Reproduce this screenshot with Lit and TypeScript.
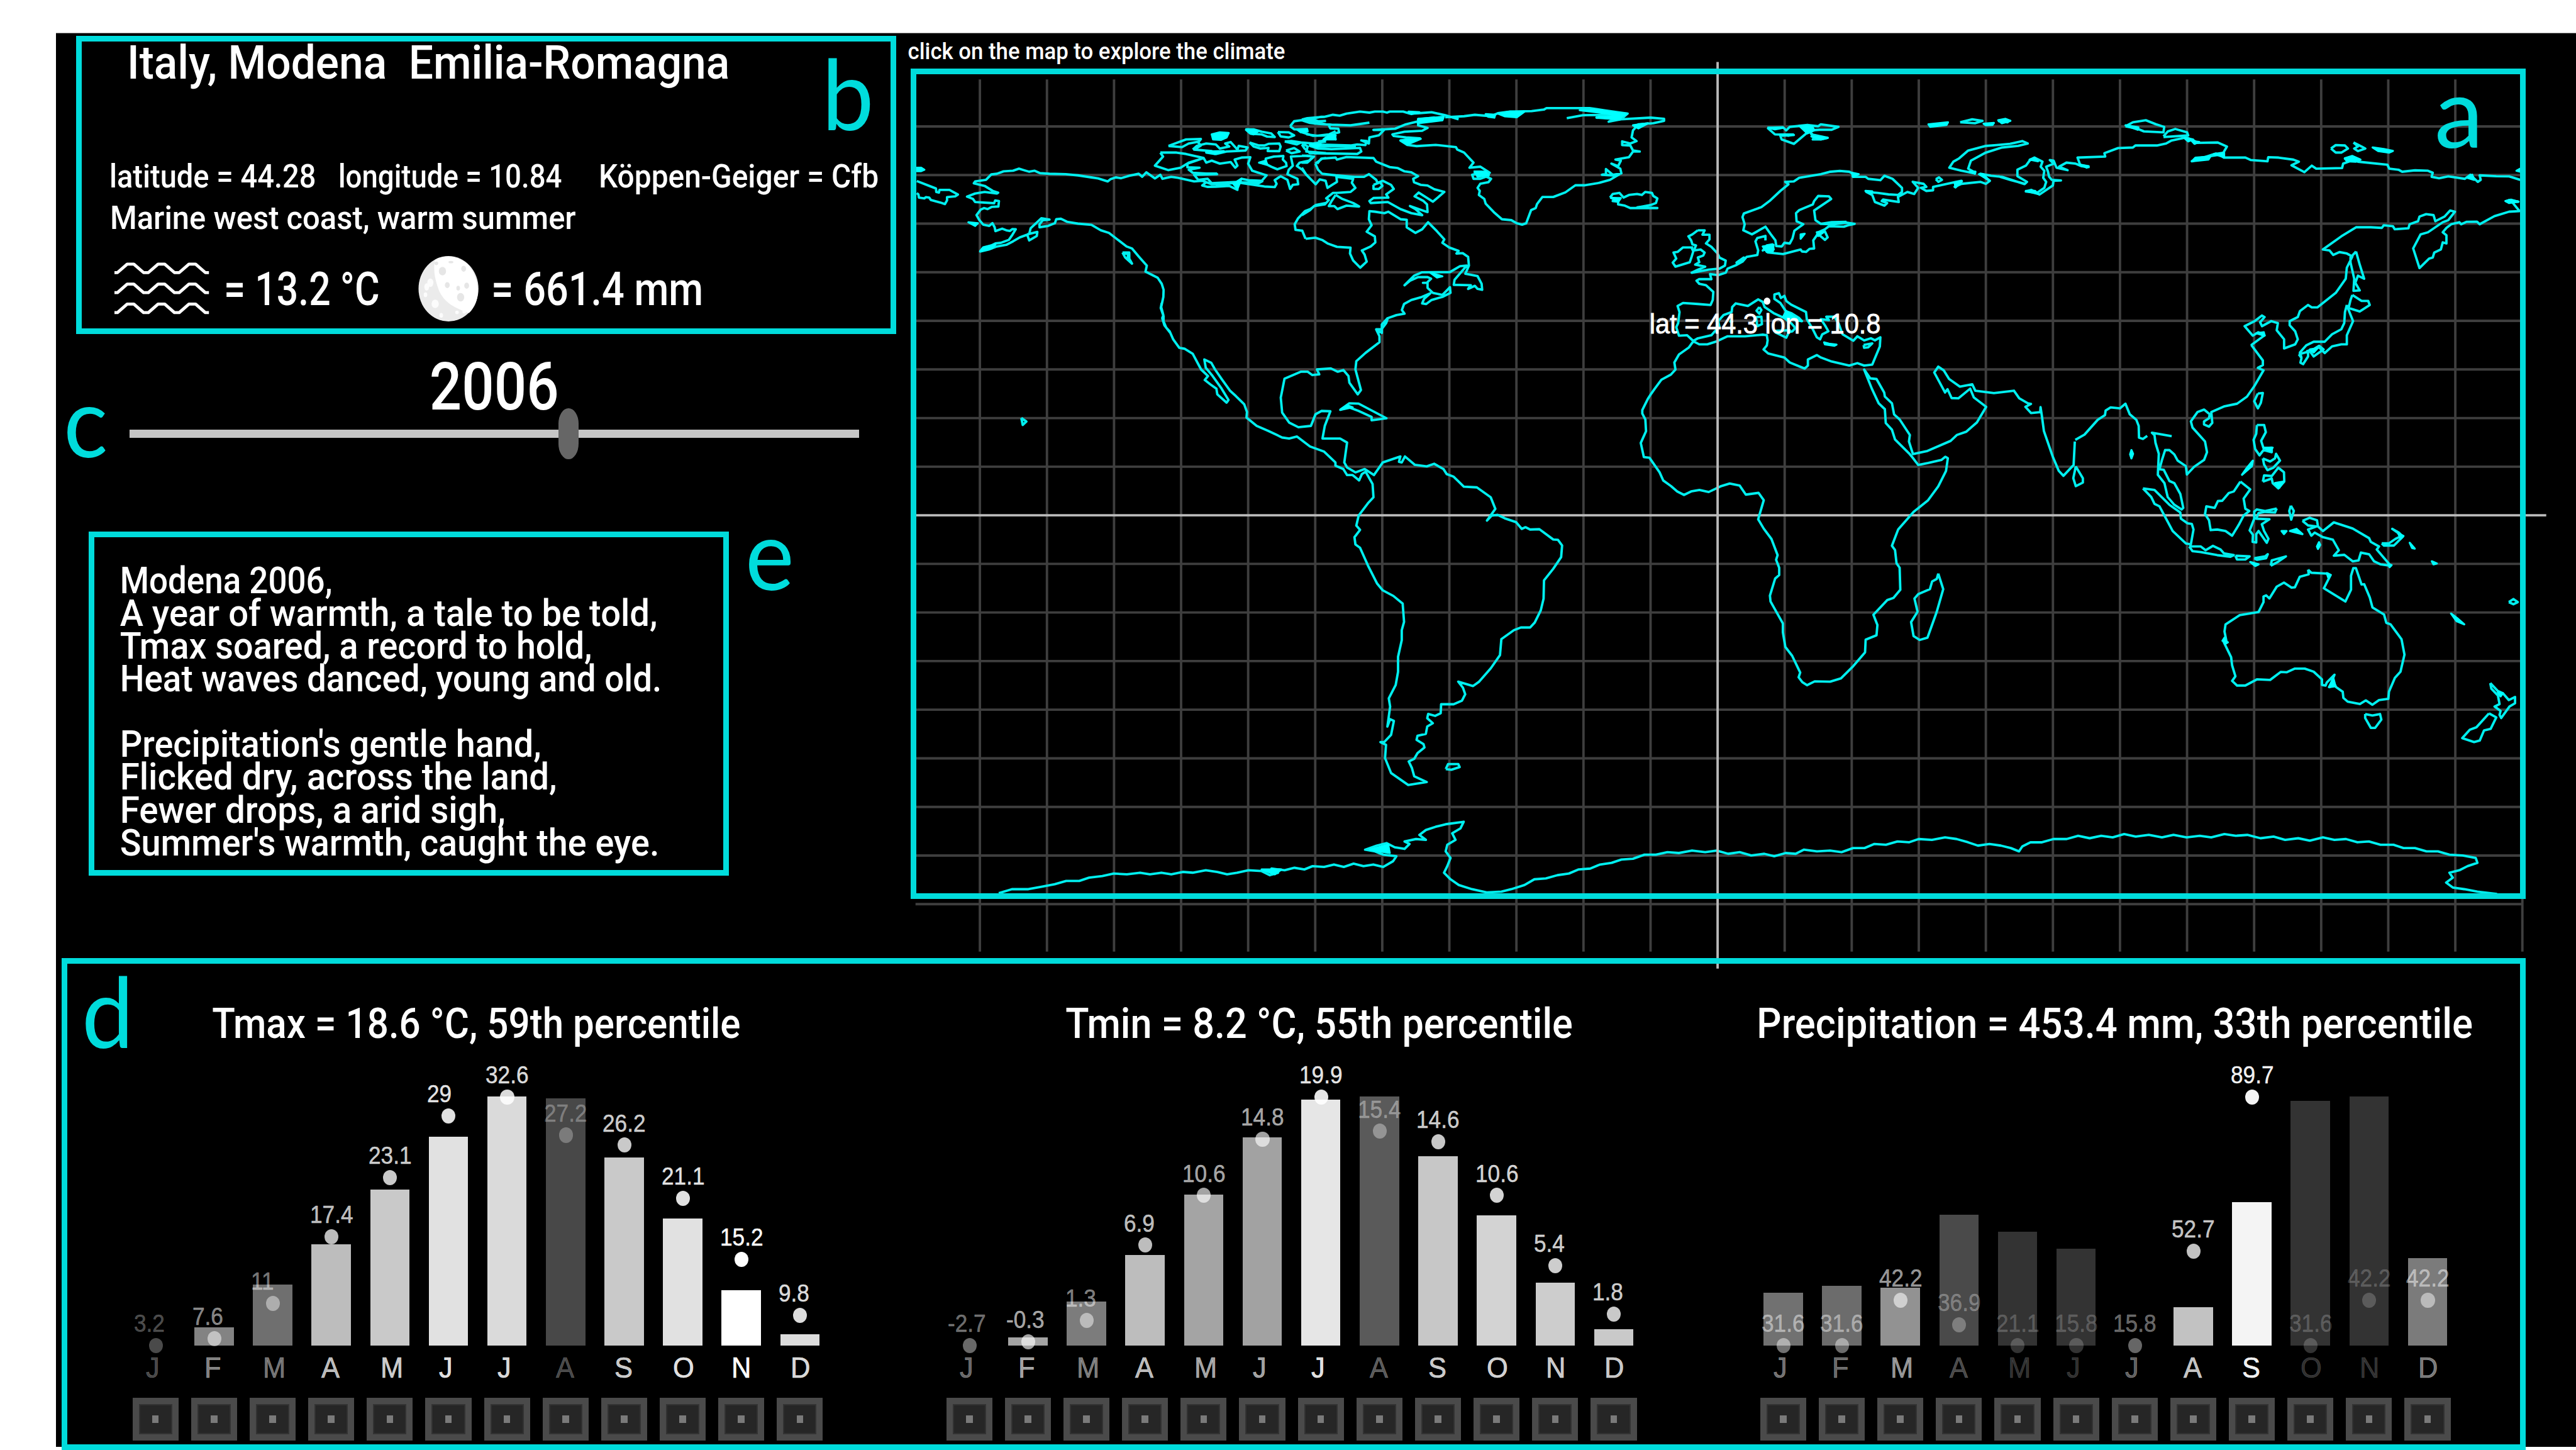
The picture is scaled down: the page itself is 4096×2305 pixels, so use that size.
import { LitElement, html, svg, css } from "lit";
import { customElement, property } from "lit/decorators.js";

/* ---------- text fitted to a given ink width ---------- */

@customElement("fit-text")
export class FitText extends LitElement {
  @property() text = "";
  @property({ type: Number }) size = 40;
  @property({ type: Number }) width = 100;
  /* height of the capitals; the bottom edge of the element is the baseline */
  @property({ type: Number }) cap = 30;
  @property() face = "Roboto";
  @property({ type: Number }) weight = 400;

  static styles = css`
    :host { display: block; flex: none; color: #fff; }
    .box { display: block; overflow: visible; }
    .txt { fill: currentColor; white-space: pre; }
  `;

  render() {
    const b = this.size * 0.04;
    return html`<svg class="box" width=${this.width} height=${this.cap}>
      <text class="txt" x=${-b} y=${this.cap} textLength=${this.width + 2 * b}
        lengthAdjust="spacingAndGlyphs" font-size=${this.size} font-weight=${this.weight}
        font-family="${this.face}, sans-serif">${this.text}</text>
    </svg>`;
  }
}

/* ---------- world map ---------- */

interface Sheet {
  x: number;
  y: number;
  sx: number;
  sy: number;
  lines: string[];
  solids?: string[];
}

const SHEETS: Sheet[] = [
  {
    x: 1490, y: 50, sx: 2.24, sy: 3,
    lines: [
      "54,746 104,772 125,783 126,800 136,803 138,790 175,790 206,813 196,822 166,826 166,842 158,860 140,852 106,840 100,828 88,826 82,832 62,828 60,812 54,806",
      "288,1095 300,1075 330,1065 345,1055 365,1052 395,1037 408,1012 420,985 408,984 398,993 385,990 370,982 345,994 342,975 334,955 322,968 300,962 285,938 275,915 290,888 303,880 316,885 332,874 356,872 358,845 344,842 340,856 270,850 262,835 240,823 270,808 305,800 350,808 355,804 335,795 305,770 265,757 270,748 310,740 330,713 350,710 375,698 410,695 432,685 450,692 470,700 490,695 510,707 545,710 605,712 650,718 700,728 725,733 760,748 770,737 790,728 810,732 840,720 875,710 888,725 903,703 935,733 955,715 963,735 995,725 1020,730 1080,748 1110,745 1125,752 1110,768 1130,775 1160,774 1210,770 1240,790 1238,770 1250,755 1300,765 1340,773 1378,776 1385,760 1378,742 1400,722 1425,740 1435,785 1445,765 1465,762 1462,735 1440,722 1425,712 1430,690 1445,670 1440,640 1438,625 1500,620 1520,625 1505,645 1470,655 1460,672 1480,690 1495,715 1530,762",
      "1568,855 1530,865 1510,885 1490,895 1465,930 1452,960 1455,988 1480,992 1492,1032",
      "288,1095 320,1085 350,1070 385,1062 410,1045 435,1025 470,1008 475,980 495,955 515,930 545,937 520,940 508,960 508,975 540,968 565,955 570,935 587,933 610,948 650,957 700,963 735,990 765,1003 830,1070 850,1080 875,1120 905,1165 900,1195 945,1225 960,1255 967,1285 966,1320 958,1370 966,1410 962,1425 970,1460 993,1500",
      "462,1010 500,998 498,1018 470,1040 462,1010",
      "815,1100 840,1100 840,1130 850,1155 825,1125 815,1100",
      "820,1105 836,1106 834,1128 845,1148",
      "955,605 1015,605 1050,612 1115,632 1060,655 1030,680 985,692 935,670 965,625 955,605",
      "1115,632 1125,655 1145,645 1175,660 1215,652 1232,680 1240,670 1230,640 1255,630 1288,628 1280,660 1295,695 1348,718 1330,745 1280,742 1255,735 1240,750 1145,757 1130,735 1095,740 1080,715 1165,712 1075,705 1060,690 1100,680 1055,678 1055,660 1115,632",
      "1080,708 1165,709",
      "1110,745 1145,762 1200,760 1240,752 1320,756 1335,745",
      "1325,655 1345,650 1345,635 1375,625 1410,622 1408,640 1420,655 1422,672 1388,688 1365,675 1350,665 1325,655",
      "985,572 1050,540 1105,538 1095,555 1105,570 1080,590 1145,598 1125,605 1160,612 1200,600 1270,595 1278,580 1245,572 1240,590 1215,553 1195,560 1210,575 1175,585 1160,565 1125,560 1090,572 1075,590",
      "985,572 1035,578 1060,560 1100,550",
      "1270,490 1300,490 1330,502 1365,510 1378,528 1350,526 1330,515 1290,512 1270,490",
      "1390,503 1430,505 1450,520 1430,530 1400,525 1390,503",
      "1285,555 1320,570 1340,570 1355,562 1395,560 1400,575 1395,598 1352,597 1355,582 1325,585 1300,575 1285,555",
      "1415,550 1440,548 1475,555 1460,565 1415,550",
      "1420,595 1450,583 1470,600 1440,608 1420,595",
      "1435,475 1450,450 1500,440 1550,428 1568,427",
      "1495,440 1530,455 1568,465 M1510,436 1540,450 1568,448",
      "1435,475 1450,490 1495,490 1480,505 1520,522 1568,520",
      "1480,560 1500,575 1495,600 1568,608 M1475,555 1520,560 1568,550",
      "1535,660 1550,635 1568,632",
    ],
    solids: [
      "54,680 70,680 82,690 70,697 54,697",
      "245,950 280,955 270,968",
      "1145,515 1175,505 1208,508 1200,530 1180,542 1150,540",
      "1272,490 1300,492 1315,502 1300,515 1285,508",
      "1460,490 1498,488 1500,500 1475,505",
      "1125,600 1190,598 1155,612",
      "1320,655 1345,645 1350,662",
      "1225,760 1255,735 1240,785",
      "288,1095 300,1076 345,1060 330,1080",
    ],
  },
  {
    x: 2150, y: 50, sx: 2.24, sy: 3,
    lines: [
      "0,680 15,712 51,762 66,738 88,745 95,780 112,765 130,750 128,725 190,735 185,755 198,780 180,800 130,805 115,805 90,832 100,840 85,862 45,870 30,890 0,915",
      "14,1032 50,1027 75,1038 95,1055 130,1072 180,1076 178,1105 190,1140 216,1175 240,1145 232,1110 222,1090 255,1070 272,1050 270,1020 240,997 258,965 248,935 250,895 270,898 305,905 320,898 365,935 388,938 388,975 420,1003 445,985 467,950 500,995 527,1035 520,1052 545,1075 580,1092 572,1105 595,1103 615,1122 618,1165 605,1205 650,1217 665,1255 667,1285 650,1280 640,1265 615,1280 625,1262 562,1260 565,1235 610,1165 585,1168 548,1197 445,1198 415,1215 380,1262 400,1240 430,1222 465,1222 478,1230 462,1250 448,1250 465,1250 465,1275 485,1300 520,1310 548,1272 550,1300 520,1320 480,1335 460,1355 445,1352 452,1330 475,1302 440,1322 405,1335 378,1355 370,1385 380,1403 350,1410 318,1425 312,1450 295,1480 275,1480 288,1500",
      "0,442 20,435 60,430 85,428 115,418 140,422 165,412 215,402 250,407 270,402 300,402 315,407 325,402 375,402 400,412 430,410 480,405 530,420 555,430 580,440",
      "520,445 430,440 490,432 430,450 385,465 345,487 265,493 305,492 285,520 250,530 248,560 220,545 240,548 235,568 205,565 180,570 50,565 30,572 60,585 110,588 215,582 220,600 205,612 30,608 10,585 0,565",
      "0,445 30,458 60,463 110,467 180,470 250,457",
      "20,435 60,460 M60,575 200,572",
      "100,470 105,485 135,487 138,505 120,510 125,540 105,520 85,545 60,550",
      "0,495 20,515 55,522 100,515 125,500",
      "0,620 45,625 20,655 0,655",
      "50,660 75,635 125,630 130,640 165,627 265,632 275,650 325,677 355,682 380,698 405,703 430,722 412,735 415,752 440,765 465,768 490,787 527,800 485,848 432,803 417,822 450,845 463,862 465,900 400,870 420,885 445,915 405,905 365,885 318,850 255,855 250,845 265,830 320,828 312,812 340,785 330,765 300,745 280,755 275,740 248,712 230,725 195,725 125,718 75,710 60,690 55,675 50,660",
      "125,815 110,845 100,870 120,870 132,885 165,868 212,872 190,855 150,835 125,815",
      "265,765 290,752 298,770 285,785 265,785 265,765",
      "530,430 600,425 640,418 700,425 725,410 770,402 850,400 895,392 905,385 1065,385 1115,395 1205,412 1180,440 1290,432 1340,438 1340,448 1300,460 1245,465 1225,495 1220,530 1238,548 1215,560 1185,550 1185,568 1215,570 1225,595 1250,600 1225,600 1210,628 1160,640 1180,645 1170,672 1145,660 1178,685 1182,708 1150,715 1125,687 1125,712 1110,715 1150,718 1175,712 1140,740 1100,755 1045,767 1012,767 975,802 930,825 890,825 870,860 865,880 848,890 830,955 815,962 795,955 775,940 740,935 710,900 680,858 675,835 655,815 658,795 650,780 660,760 690,752 700,735 675,720 695,705 660,675 620,680 635,655 600,605 575,590 570,578 495,567 425,573 390,567 365,545 395,540 437,535 385,530 340,523 335,515 380,502 445,497 465,483 430,470 430,455",
      "635,700 665,700 690,720 660,735 635,735 630,715 660,705 680,725",
      "980,435 1040,420 1150,418 1090,432 1180,440 1135,452 1180,425 1205,412",
      "1140,828 1150,810 1175,805 1190,828 1210,815 1240,810 1258,815 1270,800 1295,805 1300,820 1315,832 1310,855 1290,865 1240,877 1315,880 1215,880 1195,868 1170,862 1170,848 1150,845 1175,835 1140,828",
    ],
    solids: [
      "725,412 770,402 822,404 795,430 750,425",
      "680,415 715,418 712,432 690,428",
      "395,402 435,405 405,415",
      "430,438 525,428 520,445 430,460",
      "475,1200 520,1218 500,1224",
      "1028,395 1110,395 1140,405 1205,412 1180,425 1130,412",
      "1090,430 1185,425 1175,442",
      "365,545 440,537 390,565",
      "1145,830 1180,830 1170,850",
      "80,540 105,515 125,520 120,540",
      "1225,470 1280,460 1245,485",
      "30,565 70,565 55,580",
      "640,700 680,700 692,715 650,725",
    ],
  },
  {
    x: 2650, y: 150, sx: 2.24, sy: 3,
    lines: [
      "345,690 370,690 362,712 388,712 388,735 375,755 395,772 418,805 425,825 448,840 445,865 425,880 385,885 322,900 345,885 372,870 335,860 350,848 345,825 365,815 370,800 355,785 330,790 338,765 325,760 320,740 310,720 325,710 345,690",
      "328,775 290,775 270,797 255,800 265,830 252,850 262,870 315,848 322,820 328,795 322,778",
      "920,410 905,400 870,396 835,400 800,412 720,430 700,448 668,450 680,462 650,495 610,545 580,575 515,607 510,625 518,660 513,690 545,710 595,672 615,710 632,740 635,768 655,770 665,752 685,755 695,730 702,692 735,660 710,645 708,605 720,590 770,562 775,545 790,520 830,522 838,535 775,592 780,640 800,658 850,660 895,652 925,658 900,665 885,672 830,670 815,685 790,700 785,715 772,740 775,780 758,782 745,797 730,795 725,785 660,808 605,800 600,780 585,790 600,765 620,760 625,785 600,800",
      "790,700 815,695 825,725 815,737 795,715",
      "800,658 840,650 895,648",
      "595,740 595,718 565,728 558,745 568,790 565,812 525,822 510,845 490,860 488,850 515,825 488,862 455,880 448,900 420,912 390,907 395,932 350,932 340,940 350,955 375,962 402,995 400,1035 392,1060 345,1055 290,1050 270,1065 277,1095 272,1150 265,1170 275,1212 305,1210 328,1238 345,1225 395,1210 408,1190 425,1170 420,1140 440,1110 470,1095 472,1070 485,1052 530,1065 568,1032 585,1045 592,1070 625,1100 665,1125 690,1150 700,1165 705,1175 695,1190 680,1195 680,1165",
      "690,1130 730,1140 720,1125 690,1100 670,1090 650,1050 628,1030 628,1008 645,1002 652,1025 665,1015 672,1040 690,1058 745,1095 748,1130 770,1180 785,1220 797,1230 805,1205 828,1190 815,1160 800,1130 830,1135 820,1118 850,1118 865,1150 880,1205 920,1237 935,1215 960,1235 985,1225 1000,1235 1020,1220 1018,1265 990,1355 960,1360 935,1348 905,1360 840,1340 800,1320 785,1308 752,1330 752,1360 740,1375 685,1345 665,1320 605,1300 588,1280 600,1260 603,1235 600,1210 585,1207 520,1215 455,1215 415,1240 380,1255 350,1255 328,1240 312,1270 275,1305 258,1345 262,1380 245,1405 210,1430 185,1475 172,1500",
      "572,1070 580,1085 572,1103 562,1088 572,1070",
      "560,1120 580,1118 582,1155 565,1165 560,1120",
      "630,1188 685,1185 672,1222 630,1195",
      "958,1258 990,1250 975,1270 960,1272 958,1258",
      "462,1140 475,1145",
      "920,410 920,425 965,425 975,435 1020,442 1035,420 1065,435 1100,480 1100,500 1085,515 1050,512 1010,505 968,500 990,515 1000,550 1035,568 1045,555 1025,545 1030,538 1088,550 1085,525 1120,500 1145,510 1160,480 1140,450 1180,460 1190,475 1170,480 1190,495 1215,492 1215,475 1300,450 1320,445 1295,475 1320,460 1390,450 1410,460 1425,445 1390,410 1430,420 1470,425 1555,462",
      "1225,437 1237,428 1248,440 1235,450 1225,437",
      "1370,408 1320,395 1275,380 1290,350 1310,335 1345,295 1410,272 1450,268 1500,262 1545,248 1565,260 1530,272 1470,280 1410,305 1355,345 1345,385 1372,405",
      "602,182 660,180 672,195 685,178 750,168 790,175 800,165 865,178 840,192 795,192 760,195 765,215 825,232 800,240 770,240 778,225 755,200 700,262 655,240 650,222 700,218 630,215 602,182",
      "1315,155 1360,140 1398,148 1370,160 1315,155",
    ],
    solids: [
      "725,710 740,707 725,732",
      "812,1245 830,1252 858,1256 850,1262 815,1255",
      "720,172 768,175 775,195 750,210",
      "605,182 660,182 630,190",
      "765,225 825,232 800,240",
      "650,215 698,215 680,222",
      "1198,165 1270,155 1265,168 1205,178",
      "1402,162 1440,158 1435,168 1410,170",
      "1458,150 1500,146 1490,156",
      "915,405 940,412 918,425",
      "585,770 625,762 622,795 600,798",
      "1295,455 1322,447 1298,478",
      "785,700 810,700 790,718",
      "660,1120 728,1140 700,1120 672,1090",
      "965,495 990,497 985,508",
      "1350,400 1372,400 1370,410",
      "1385,412 1400,412 1424,445",
    ],
  },
  {
    x: 3300, y: 100, sx: 1.6415, sy: 3,
    lines: [
      "0,572 35,592 72,610 78,600 52,572 52,540 75,520 85,495 98,480 120,500 115,525 125,545 122,580 130,600 125,630 105,655 75,648 90,640 112,663 148,618 150,595 170,593 145,590 138,575 135,550 130,525 150,510 140,492 150,495 158,530 188,542 165,525 185,505 210,510 225,522 245,527 222,515 215,480 290,475 288,458 325,433 365,430 372,420 430,420 455,410 470,395 510,380 530,395 540,407 595,405 620,425 612,450 612,475 590,460 525,498 550,480 600,465 612,480 670,480 685,492 730,498 732,478 760,480 800,490 815,500 795,518 830,552 850,520 862,535 932,532 935,510 950,500 940,485 960,475 980,490 975,500 1055,515 1060,535 1085,540 1095,550 1130,543 1165,545 1178,555 1175,575 1195,582 1220,573 1265,585 1280,565 1300,600 1308,590 1305,568 1350,572 1385,573 1415,590",
      "345,325 365,305 400,295 428,315 450,328 448,355 395,350 375,335 345,325",
      "448,375 460,350 480,338 512,355 515,370 448,378",
      "902,435 915,418 940,420 948,435 930,455 915,455 902,435",
      "963,405 985,425 995,435 975,448 965,435 975,425 963,405",
      "1375,698 1385,690 1410,698 1393,700 1413,745 1385,748 1345,770 1305,810 1298,797 1270,798 1255,810 1250,800 1228,810 1215,828 1205,850 1215,865 1215,905 1205,900 1200,935 1182,950 1178,975 1168,980 1142,1027 1125,930 1145,860 1165,850 1205,800 1220,790 1238,748 1225,742 1210,772 1185,795 1180,765 1160,760 1142,772 1138,795 1115,810 1112,830 1075,835 1070,820 1045,815 1040,828 1010,825 970,825 930,870 880,935 898,940 908,962 925,948 945,955 960,970 945,1025 942,1080 915,1150 865,1222 850,1222 840,1210 818,1240 812,1270 790,1290 790,1310 805,1340 812,1380 805,1405 775,1425 775,1380 755,1335 758,1300 740,1290 715,1315 710,1295 722,1270 715,1262 695,1290 668,1315 690,1362 705,1345 722,1360 685,1410",
      "970,945 980,1010 992,1080 975,1065 968,1100 980,1138 963,1140 965,1080 955,1000 955,975 970,945",
      "960,1160 985,1190 1003,1190 1007,1210 980,1242 950,1225 955,1185 960,1160",
      "945,1210 940,1245 938,1300 930,1330 905,1355 885,1392 855,1392 835,1410 818,1445 822,1470",
      "945,1210 950,1235 962,1290 945,1360 945,1405 930,1405 905,1415 885,1448 870,1420 835,1440",
      "845,1440 870,1412 882,1430 855,1465 845,1440",
    ],
    solids: [
      "0,295 20,288 33,298 10,310",
      "1015,430 1045,437 1070,447 1060,455 1030,448",
      "1405,545 1415,535 1415,550",
      "345,320 380,330 378,342",
      "505,383 528,390 515,400",
      "525,398 545,402 532,412",
      "525,498 535,480 575,475 570,490",
      "585,462 610,455 612,478",
      "940,483 960,472 982,490 970,500 945,498",
      "75,645 100,645 108,660",
      "1375,695 1390,688 1410,698 1385,705",
      "222,515 245,522 240,530",
      "85,490 98,480 108,498",
      "1272,580 1285,565 1290,590",
      "700,1350 720,1345 722,1362",
      "845,1430 865,1425 855,1445",
    ],
  },
  {
    x: 1490, y: 500, sx: 1.3067, sy: 1.8233,
    lines: [
      "560,0 558,15 564,40 564,55 570,75 577,85 585,110 598,135 610,138 627,153 645,200 660,220 653,232 665,245 678,258 680,275 700,300 704,292 688,255 670,220 655,195 652,170 667,180 675,200 690,230 708,265 720,280 738,305 744,328 743,345 765,370 790,385 820,405 835,408 852,402 880,432 910,447 935,480 935,490 952,500 960,518 972,518 986,534 992,515 1000,508 1015,545 1017,585 1005,603 985,640 980,670 988,683 976,705 978,727 988,737 1005,790 1025,845 1037,865 1060,882 1080,905 1083,960 1078,985 1078,1015 1070,1065 1070,1110 1065,1150 1050,1190 1053,1215 1047,1275 1053,1253 1061,1258 1055,1300 1040,1322 1032,1322 1044,1330 1042,1370 1055,1415 1092,1451 1132,1442 1105,1425 1100,1400 1093,1380 1105,1372 1112,1355 1127,1338 1125,1328 1110,1315 1112,1303 1130,1297 1133,1275 1145,1265 1133,1250 1135,1237 1150,1243 1162,1235 1163,1208 1190,1208 1208,1197 1215,1178 1210,1158 1200,1140 1232,1153 1245,1140 1270,1100 1290,1060 1293,1012 1320,985 1335,977 1355,977 1365,962 1378,925 1384,890 1385,835 1405,800 1422,765 1424,730 1415,713 1405,712 1375,681 1355,682 1345,675 1337,680 1325,660 1300,648 1285,638 1272,640 1262,655 1280,620 1270,585 1240,555 1212,553 1190,523 1175,515 1168,500 1148,484 1132,492 1106,487 1085,462 1078,480 1072,478 1075,462 1037,480 1018,518 998,500 978,510 960,495 954,480 960,420 945,408 907,408 912,370 924,326 905,325 892,335 882,370 855,374 835,360 820,330 817,285 825,228 860,207 875,207 885,217 900,215 895,200 925,197 940,207 952,202 963,220 965,240 983,275 990,262 978,200 980,175 1000,150 1030,118 1030,100 1023,80 1035,90 1035,65 1048,45",
      "945,322 965,302 985,303 1045,347 1013,353 1013,343 985,325 960,312 945,322",
      "1173,1403 1178,1388 1200,1388 1203,1397 1185,1405 1173,1403",
      "257,346 268,357 260,367 257,346",
    ],
    solids: ["945,322 960,308 972,314"],
  },
  {
    x: 2650, y: 450, sx: 1.96, sy: 2.0632,
    lines: [
      "152,410 140,430 122,468 122,480 132,500 134,540 117,580 127,628 145,630 178,680 190,708 215,727 235,745 257,757 280,745 307,740 337,747 375,728 405,718 437,725 457,756 498,750 515,775 497,840 515,872 540,907 560,962 555,978 565,1005 565,1030 552,1042 535,1100 537,1120 577,1195 577,1225 585,1275 607,1305 633,1362 628,1378 640,1395 655,1405 680,1392 730,1393 765,1382 805,1340 843,1293 845,1250 880,1235 883,1200 870,1165 915,1115 935,1108 957,1080 955,1005 945,990 940,945 930,930 950,875 1000,815 1047,775 1080,728 1105,675 1111,632 1103,627 1090,638 1048,648 1015,655 997,630 985,615 940,568 930,535 910,512 907,465 887,445 865,395 840,330 860,360 880,362 905,408 907,422 930,445 937,483 955,500 988,553 985,575 998,618 1045,607 1120,573 1140,553 1170,542 1205,510 1235,457 1195,425 1183,395 1145,428 1123,427 1110,397 1102,408 1067,340 1080,320 1098,333 1115,362 1150,388 1190,380 1200,402 1260,410 1325,402 1342,428 1370,445 1380,447 1362,457 1380,478 1410,475 1411,458 1415,485 1422,540 1450,625 1470,675 1485,692 1518,655 1522,575",
      "1080,1025 1096,1078 1075,1155 1045,1243 1020,1251 1000,1238 992,1190 1013,1155 1003,1110 1015,1095 1053,1078 1060,1052 1075,1043 1080,1025",
      "1525,660 1548,700 1548,715 1525,727 1517,700 1525,660",
    ],
  },
  {
    x: 3400, y: 550, sx: 1.834, sy: 1.96,
    lines: [
      "50,345 78,328 118,280 140,265 142,250 157,240 185,243 202,228 215,262 235,280 242,300 243,338 255,342 268,332",
      "342,333 282,322 290,330 293,355 303,390 300,458 320,485 330,530 350,555 372,570 377,565 368,520 350,485 335,478 318,442 305,440 312,412 322,378 335,378 350,392 360,412 385,430 388,457 410,432 440,410 449,385 443,350 405,305 400,285 420,255 440,247 457,262 455,275 440,285 440,295 455,302 465,290 462,255 500,237 540,228 570,205 593,170 620,120 603,112 618,103 618,88 583,38",
      "727,68 735,80 732,95 740,100 755,75 755,60 727,68",
      "603,195 618,193 612,225 603,243 592,220 603,195",
      "600,297 622,297 627,320 613,348 620,372 645,370 645,385 620,378 608,395 595,375 590,345 598,325 600,297",
      "618,405 640,415 655,405 658,390 670,412 650,435 632,443 622,425 618,405",
      "618,480 622,460 645,462 665,435 682,450 683,480 665,502 648,485 645,470 618,480",
      "255,502 290,507 335,555 368,580 370,600 390,615 403,617 408,635 400,683 385,680 345,640 305,560 290,552 280,530 255,502",
      "395,690 430,690 445,702 467,688 490,700 500,712 530,718 520,723 480,718 430,708 405,705 395,690",
      "535,720 578,722 565,732 540,732 535,720",
      "592,728 625,722 633,715 628,728 600,733 592,728",
      "642,752 645,735 688,722 660,742 642,752",
      "550,480 580,505 560,535 565,568 577,575 560,590 545,620 525,655 505,640 480,635 460,637 455,605 443,585 447,560 472,565 482,543 495,542 515,517 530,512 550,480",
      "660,567 655,580 625,578 605,582 598,600 638,602 615,618 622,640 635,665 630,678 605,640 598,650 598,677 587,675 588,652 578,638 592,600 592,577 600,570 625,575 660,567",
      "703,558 712,575 704,603 698,575 703,558",
      "738,607 760,597 782,605 785,625 800,640 833,612 890,632 940,663 945,675 970,690 963,700 1005,752 975,748 955,738 940,715 915,710 908,735 890,738 865,717 833,720 848,702 830,668 800,660 775,645 765,655 755,635 780,625 755,622 738,607",
      "978,680 1000,680 1020,665 1040,655 1010,633 1030,645 1042,658 1015,687 985,687 978,680",
      "1363,870 1377,860 1390,870 1377,877 1363,870",
      "755,765 765,775 815,778 822,785 803,825 868,868 885,830 885,785 892,760 900,760 917,813 925,812 942,855 950,887 985,910 992,937 1005,942 1038,990 1047,1040 1035,1095 1018,1115 1000,1160 998,1183 970,1187 950,1202 930,1188 912,1200 875,1192 862,1180 860,1160 840,1145 832,1130 820,1145 835,1105 812,1130 808,1140 797,1138 797,1120 772,1095 745,1085 715,1085 690,1097 672,1096 640,1122 600,1120 565,1140 540,1140 525,1125 535,1110 525,1075 522,1048 500,1000 508,998 502,965 505,942 548,912 605,902 620,870 620,852 628,848 638,858 660,820 682,807 705,823 715,822 730,788 757,780 755,765",
      "928,1232 950,1237 973,1232 977,1250 958,1277 945,1277 928,1245 928,1232",
      "1307,1132 1330,1158 1345,1165 1363,1187 1382,1177 1382,1197 1365,1208 1340,1245 1335,1235 1338,1222 1320,1208 1335,1200 1330,1172 1310,1150 1307,1132",
      "1303,1230 1325,1243 1308,1280 1288,1285 1275,1318 1258,1323 1222,1310 1245,1283 1265,1275 1303,1230",
    ],
    solids: [
      "220,378 225,390 220,405 216,392",
      "555,458 570,435 588,412 585,430",
      "580,740 605,748 595,753",
      "700,640 720,633 738,650",
      "675,640 690,640 682,650",
      "782,690 788,676 792,685 785,698",
      "1063,678 1078,697 1070,695",
      "1130,738 1145,745 1135,748",
      "1188,907 1210,925 1228,942 1205,932",
      "818,1145 832,1118 838,1142",
      "998,748 1008,750 1002,757",
      "620,370 648,370 640,380",
      "655,485 680,480 668,500",
      "1028,648 1044,656 1036,665",
      "496,995 512,1000 504,1005 502,985",
      "1330,1162 1345,1165 1338,1175",
      "812,776 824,782 816,790",
    ],
  },
  {
    x: 0, y: 0, sx: 0.36859, sy: 0.36859,
    lines: [
      "608,543.5 616,541 626,541 634,539.5 642,538 649,536 657,536 663,534 671,533 678,531.5 686,532 694,531 700,532 707,531 713,532 720,530.5 726,531 734,529.5 741,530.5 747,532 753,531 760,529.5 768,530 773,532.5 778,531 774,528.5 782,529.5 788,528 794,529 799,527 806,527.5 812,526 818,527.5 824,525.5 830,527 836,526 842,527.5 848,524 850,521 842,520 837,518 831,517 838,514.5 844,513 849,515.5 855,516.5 858,513.5 855,512 862,510.5 868,511 864,508 868,505 874,503 880,501.5 891,500 889,504 884,507 886,511 881,514 880,518 883,522 881,527 879,531 883,535 888,538.5 896,541 905,543 914,542.5 920,541 928,538.5 934,535 941,534.5 948,532.5 955,531.5 961,529 968,528.5 974,526 981,525 987,523 994,522.5 1001,520 1008,520 1015,518.5 1022,519 1030,517.5 1038,518.5 1045,517.5 1052,519.5 1059,518.5 1066,520.5 1074,519.5 1080,521 1087,519 1093,519.5 1098,517 1106,518 1114,517.5 1121,518.5 1128,516 1135,516 1141,513.5 1148,514 1155,512 1162,512.5 1168,510.5 1176,511 1184,509.5 1191,510.5 1198,512.5 1204,514.5 1211,513.5 1218,514.5 1224,516 1229,518 1231,515 1236,512.5 1243,512.5 1250,510.5 1258,510.5 1265,508.5 1272,510 1279,508.5 1286,509.5 1293,507.5 1300,509 1308,508 1316,509.5 1323,508 1331,509.5 1339,508.5 1346,509.5 1354,507.5 1361,508.5 1368,508 1376,510 1384,509 1391,511 1399,510 1406,511.5 1414,509.5 1421,511 1428,510.5 1435,512.5 1442,512 1449,514 1457,514 1463,516 1470,516 1477,518 1484,518 1491,520 1499,520.5 1507,522 1508,525 1502,527 1497,529.5 1491,531 1493,534 1489,537 1493,540 1500,541 1508,542.5 1520,544",
    ],
    solids: ["768,529 780,529 776,532", "834,517 845,514 846,519"],
  },
];

function toPath(s: Sheet, line: string): string {
  return line
    .split("M")
    .map(part =>
      "M" +
      part.trim().split(/\s+/).map(p => {
        const [px, py] = p.split(",").map(Number);
        return (s.x + px / s.sx).toFixed(1) + " " + (s.y + py / s.sy).toFixed(1);
      }).join("L"))
    .join("");
}

const COAST = SHEETS.map(s => s.lines.map(l => toPath(s, l)).join("")).join("");
const ISLETS = SHEETS.map(s => (s.solids ?? []).map(l => toPath(s, l) + "Z").join("")).join("");

@customElement("world-map")
export class WorldMap extends LitElement {
  static styles = css`
    :host { display: block; position: relative; width: 2667px; height: 1371px; }
    :host::after { content: ""; position: absolute; inset: 0; border: 10px solid #00dcdc; }
    .map { display: block; overflow: visible; }
    .grid { stroke: #3e3e3e; stroke-width: 4; fill: none; }
    .axis { stroke: #b9b9b9; stroke-width: 4; fill: none; }
    .coast { stroke: #00efef; stroke-width: 4; fill: none; stroke-linejoin: round; }
    .islet { fill: #00ffff; stroke: #00ffff; stroke-width: 3.4; stroke-linejoin: round; }
    .pin, .coords { fill: #fff; }
    .coords { font: 47px "Liberation Sans", sans-serif; stroke: #fff; stroke-width: 0.8; }
  `;

  render() {
    const lon = [];
    for (let k = -11; k <= 12; k++) if (k) lon.push(2836.6 + k * 110.75);
    const lat = [];
    for (let k = -8; k <= 8; k++) if (k) lat.push(850.5 + k * 80.25);
    return html`<svg class="map" width="2667" height="1371" viewBox="1504 113 2667 1371">
      ${lat.map(y => svg`<path class="grid" d="M1512 ${y}H4165"/>`)}
      ${lon.map(x => svg`<path class="grid" d="M${x} 131V1571"/>`)}
      <path class="axis" d="M1504 850.5H4205"/>
      <path class="coast" d=${COAST}/>
      <path class="islet" d=${ISLETS}/>
      <path class="axis" d="M2836.6 102V1599"/>
      <ellipse class="pin" cx="2918.3" cy="497" rx="5.5" ry="6"/>
      <text class="coords" x="2724" y="550.5" textLength="382" lengthAdjust="spacingAndGlyphs">lat = 44.3 lon = 10.8</text>
    </svg>`;
  }
}

/* ---------- monthly chart ---------- */

type Month = [label: string, tone: number, bar: number, dot: number];

interface ChartData {
  title: string;
  inset: number;
  width: number;
  months: Month[];
}

const NAMES = "JFMAMJJASOND".split("");

const CHARTS: ChartData[] = [
  {
    title: "Tmax = 18.6 °C, 59th percentile", inset: 145, width: 867,
    months: [
      ["3.2", 0x4a, 0, 0], ["7.6", 0x83, 30.4, 11.7], ["11", 0x6f, 100.6, 69.8], ["17.4", 0xbd, 166.7, 179.4],
      ["23.1", 0xc9, 257.2, 277.4], ["29", 0xe1, 345, 378.6], ["32.6", 0xda, 411, 410.5], ["27.2", 0x48, 408, 347.2],
      ["26.2", 0xc9, 310.4, 330.7], ["21.1", 0xe1, 209.3, 242.8], ["15.2", 0xff, 91.6, 142.2], ["9.8", 0xdc, 18.6, 49.5],
    ],
  },
  {
    title: "Tmin = 8.2 °C, 55th percentile", inset: 210, width: 832,
    months: [
      ["-2.7", 0x69, 0, 0], ["-0.3", 0xa4, 13.8, 6.4], ["1.3", 0x7c, 73, 41.5], ["6.9", 0xbd, 149, 165.6],
      ["10.6", 0xa4, 249.2, 247.6], ["14.8", 0xa2, 343.5, 340.8], ["19.9", 0xe6, 406.3, 410.5], ["15.4", 0x5a, 411, 353.6],
      ["14.6", 0xc7, 312, 336.5], ["10.6", 0xd3, 214.6, 247.6], ["5.4", 0xcd, 103.3, 132], ["1.8", 0xc9, 27.2, 52.2],
    ],
  },
  {
    title: "Precipitation = 453.4 mm, 33th percentile", inset: 8, width: 1177,
    months: [
      ["31.6", 0x71, 87.3, 0], ["31.6", 0x6c, 98.5, 0], ["42.2", 0x92, 95.3, 75], ["36.9", 0x4a, 216.2, 34],
      ["21.1", 0x33, 188, 0], ["15.8", 0x33, 159.7, 0], ["15.8", 0x66, 0, 0], ["52.7", 0xc2, 63.4, 156],
      ["89.7", 0xf4, 236.4, 410.5], ["31.6", 0x33, 404, 0], ["42.2", 0x33, 411, 75], ["42.2", 0x7b, 144.3, 75],
    ],
  },
];

@customElement("month-chart")
export class MonthChart extends LitElement {
  @property({ attribute: false }) data!: ChartData;

  static styles = css`
    :host { display: block; width: 1161px; flex: none; font-family: "Liberation Sans", sans-serif; }
    .row { display: flex; }
    .plot { height: 508px; align-items: flex-end; }
    .col { width: 96.75px; flex: none; position: relative; display: flex; justify-content: center; color: #fff; }
    .bar { width: 65px; background: currentColor; }
    .dot { position: absolute; left: 37.3px; width: 23px; height: 25px; margin-bottom: -12.5px; border-radius: 50%; background: currentColor; }
    .val { position: absolute; left: 13px; margin-bottom: 14px; font-size: 40px; line-height: 44px; white-space: nowrap; transform: scaleX(0.914); transform-origin: 0 0; -webkit-text-stroke: 0.5px currentColor; }
    .names { margin-top: 20px; height: 34px; }
    .name { padding-left: 32.5px; box-sizing: border-box; justify-content: flex-start; font-size: 48px; line-height: 34px; -webkit-text-stroke: 0.7px currentColor; }
    .glyph { transform: scaleX(0.94); transform-origin: 0 0; }
    .boxes { margin-top: 32px; }
    .toggle { width: 76px; height: 71px; box-sizing: border-box; border: 11px solid #4a4a4a; background: #262626; box-shadow: inset 0 0 0 2px #333; display: flex; align-items: center; justify-content: center; }
    .knob { width: 11px; height: 13px; background: #7a7a7a; }
  `;

  render() {
    const { title, inset, width, months } = this.data;
    const tone = (t: number) => `color:rgba(255,255,255,${(t / 255).toFixed(3)})`;
    return html`
      <fit-text style="margin-left:${inset}px" .text=${title} .width=${width} .size=${70} .cap=${50} .weight=${500}></fit-text>
      <div class="row plot">
        ${months.map(([label, t, bar, dot]) => html`<div class="col" style=${tone(t)}>
          <div class="bar" style="height:${bar}px"></div>
          <div class="dot" style="bottom:${dot}px"></div>
          <div class="val" style="bottom:${dot}px">${label}</div>
        </div>`)}
      </div>
      <div class="row names">
        ${months.map(([, t], i) => html`<div class="col name" style=${tone(t)}><span class="glyph">${NAMES[i]}</span></div>`)}
      </div>
      <div class="row boxes">
        ${months.map(() => html`<div class="col"><div class="toggle"><div class="knob"></div></div></div>`)}
      </div>`;
  }
}

/* ---------- page ---------- */

const POEM: [string, number][] = [
  ["Modena 2006,", 346], ["A year of warmth, a tale to be told,", 883], ["Tmax soared, a record to hold,", 775],
  ["Heat waves danced, young and old.", 890], ["", 10], ["Precipitation's gentle hand,", 691],
  ["Flicked dry, across the land,", 717], ["Fewer drops, a arid sigh,", 632], ["Summer's warmth, caught the eye.", 886],
];

const CRATERS = [
  [40, 25, 6, 7], [75, 21, 4, 5], [54, 10, 4, 2], [48, 48, 4, 5], [80, 49, 4, 5], [66, 53, 3, 4], [70, 68, 6, 7], [30, 12, 3, 3],
];
const SPECKS = [[20, 44, 5, 7], [28, 79, 6, 7], [14, 51, 4, 6], [64, 93, 3, 3], [38, 98, 3, 4], [12, 64, 3, 4], [76, 92, 3, 3]];

@customElement("app-root")
export class AppRoot extends LitElement {
  static styles = css`
    :host { display: block; width: 100vw; height: 100vh; overflow: hidden; background: #fff; }
    .stage { zoom: 0.96286; width: 4254px; height: 2394px; padding: 55px 0 0 92px; box-sizing: border-box; }
    .screen { position: relative; height: 2334px; background: #000; box-shadow: 0 -1px 0 #999; }
    .top { display: flex; height: 1527px; }
    .side { width: 1378px; padding: 4px 0 0 34px; flex: none; }
    .framed { border: 10px solid #00dcdc; box-sizing: border-box; }
    .place { width: 1354px; height: 493px; }
    .title { margin: 6px 0 0 78px; }
    .facts { display: flex; margin: 142px 0 0 47px; }
    .lon { margin-left: 41px; }
    .zone { margin-left: 66px; }
    .climate { margin: 30px 0 0 48px; }
    .means { display: flex; align-items: center; height: 110px; margin: 44px 0 0 54px; }
    .waves { display: block; fill: none; stroke: #fff; stroke-width: 5; stroke-linejoin: round; }
    .temp { margin-left: 28px; }
    .moon { display: block; margin: 0 24px 0 66px; }
    .year { margin: 45px 0 0 588px; }
    .slider { display: grid; align-items: center; width: 1205px; height: 84px; margin: -2px 0 0 88px; }
    .track, .thumb { grid-area: 1 / 1; }
    .track { height: 13px; background: #c6c6c6; }
    .thumb { width: 34px; height: 84px; border-radius: 17px / 26px; background: #666; margin-left: 708px; }
    .poem { display: flex; flex-direction: column; gap: 11.1px; width: 1058px; height: 568px; margin: 120px 0 0 20px; padding: 49.5px 0 0 45px; }
    .world { width: 2667px; flex: none; padding-top: 16px; }
    .hint { margin: 0 0 15px -3px; }
    .charts { position: relative; display: flex; gap: 183px; width: 4069px; height: 812px; margin-left: 10px; padding: 72px 0 0 97px; }
    .tag { position: absolute; color: #00dcdc; font: 161px/160px Lato, sans-serif; transform-origin: 0 0; }
    .tag-a { left: 3928px; top: 47px; transform: scaleX(1.01); }
    .tag-b { left: 1265px; top: 18px; transform: scaleX(0.95); }
    .tag-c { left: 13px; top: 558px; transform: scaleX(0.95); }
    .tag-d { left: 43px; top: 1533px; transform: scaleX(0.95); }
    .tag-e { left: 1139px; top: 777px; transform: scaleX(0.95); }
  `;

  private wave(y: number) {
    let d = "";
    for (let i = 0; i < 3; i++) {
      const x = i * 51;
      d += `${i ? "L" : "M"}${x} ${y + 7}L${x + 5} ${y + 7}L${x + 21} ${y - 7}L${x + 32} ${y - 7}L${x + 48} ${y + 7}`;
    }
    return svg`<path d="${d}L156 ${y + 7}"/>`;
  }

  render() {
    const din = (text: string, width: number, size: number, cap: number, cls = "", weight = 500) =>
      html`<fit-text class=${cls} .text=${text} .width=${width} .size=${size} .cap=${cap} .weight=${weight}></fit-text>`;
    return html`<div class="stage"><div class="screen">
      <div class="top">
        <div class="side">
          <div class="place framed">
            ${din("Italy, Modena  Emilia-Romagna", 989, 77, 55, "title")}
            <div class="facts">
              ${din("latitude = 44.28", 337, 53, 38)}
              ${din("longitude = 10.84", 365, 53, 38, "lon")}
              ${din("Köppen-Geiger = Cfb", 458, 53, 38, "zone")}
            </div>
            ${din("Marine west coast, warm summer", 765, 53, 38, "climate")}
            <div class="means">
              <svg class="waves" width="156" height="90">${[12, 45, 78].map(y => this.wave(y))}</svg>
              ${din("= 13.2 °C", 251, 77, 55, "temp")}
              <svg class="moon" width="100" height="108">
                <ellipse cx="50" cy="54" rx="49.5" ry="54" fill="#ebebeb"/>
                <path d="M28 6C45-4 75 0 88 22C103 48 102 76 84 94C60 86 42 76 34 56C28 40 24 22 28 6Z" fill="#fff"/>
                ${CRATERS.map(([x, y, a, b]) => svg`<ellipse cx=${x} cy=${y} rx=${a} ry=${b} fill="#e6e6e6"/>`)}
                ${SPECKS.map(([x, y, a, b]) => svg`<ellipse cx=${x} cy=${y} rx=${a} ry=${b} fill="#fcfcfc"/>`)}
              </svg>
              ${din("= 661.4 mm", 344, 77, 55)}
            </div>
          </div>
          ${din("2006", 205, 110, 79, "year")}
          <div class="slider"><div class="track"></div><div class="thumb"></div></div>
          <div class="poem framed">${POEM.map(([t, w]) => din(t, w, 61, 43))}</div>
        </div>
        <div class="world">
          ${din("click on the map to explore the climate", 620, 38, 27, "hint")}
          <world-map></world-map>
        </div>
      </div>
      <div class="charts framed">${CHARTS.map(c => html`<month-chart .data=${c}></month-chart>`)}</div>
      <div class="tag tag-a">a</div>
      <div class="tag tag-b">b</div>
      <div class="tag tag-c">c</div>
      <div class="tag tag-d">d</div>
      <div class="tag tag-e">e</div>
    </div></div>`;
  }
}
